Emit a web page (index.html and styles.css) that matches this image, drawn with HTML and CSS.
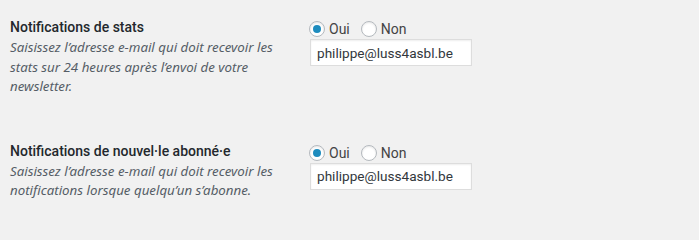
FILE: index.html
```html
<!DOCTYPE html>
<html lang="fr">
<head>
<meta charset="utf-8">
<title>Notifications</title>
<link rel="stylesheet" href="styles.css">
</head>
<body>
<div class="form-table">
  <div class="row">
    <div class="th">
      <label class="title" for="stats-email">Notifications de stats</label>
      <p class="description">Saisissez l’adresse e-mail qui doit recevoir les stats sur 24 heures après l’envoi de votre newsletter.</p>
    </div>
    <div class="td">
      <div class="radios">
        <label class="radio"><span class="dot checked"></span>Oui</label>
        <label class="radio"><span class="dot"></span>Non</label>
      </div>
      <input class="email" id="stats-email" type="text" value="philippe@luss4asbl.be">
    </div>
  </div>
  <div class="row">
    <div class="th">
      <label class="title" for="sub-email">Notifications de nouvel·le abonné·e</label>
      <p class="description">Saisissez l’adresse e-mail qui doit recevoir les notifications lorsque quelqu’un s’abonne.</p>
    </div>
    <div class="td">
      <div class="radios">
        <label class="radio"><span class="dot checked"></span>Oui</label>
        <label class="radio"><span class="dot"></span>Non</label>
      </div>
      <input class="email" id="sub-email" type="text" value="philippe@luss4asbl.be">
    </div>
  </div>
</div>
</body>
</html>
```
FILE: styles.css
```css
html, body {
  margin: 0;
  padding: 0;
  background: #f1f1f1;
}
body {
  font-family: Roboto, "Noto Sans", sans-serif;
  color: #23282d;
  font-size: 13px;
  overflow: hidden;
}
.form-table {
  padding-left: 10px;
}
.row {
  display: flex;
  padding: 18px 0 27px;
}
.row:last-child {
  padding-bottom: 0;
}
.th {
  width: 300px;
  flex: none;
}
.title {
  display: block;
  font-size: 14px;
  font-weight: 500;
  line-height: 18px;
  color: #23282d;
}
.description {
  margin: 2px 0 0;
  width: 285px;
  font-family: "Noto Sans", sans-serif;
  font-size: 13.3px;
  line-height: 19.5px;
  font-style: italic;
  color: #555d66;
}
.td {
  padding-top: 1px;
  display: flex;
  flex-direction: column;
  align-items: flex-start;
}
.radios {
  display: flex;
  align-items: center;
  height: 20px;
  margin-left: -1px;
}
.radio {
  display: flex;
  align-items: center;
  font-size: 14px;
  color: #444;
  margin-right: 11px;
}
.dot {
  box-sizing: border-box;
  width: 16px;
  height: 16px;
  border: 1px solid #b4b9be;
  border-radius: 50%;
  background: #fff;
  box-shadow: inset 0 1px 2px rgba(0,0,0,.1);
  margin-right: 4px;
  display: flex;
  align-items: center;
  justify-content: center;
}
.dot.checked::before {
  content: "";
  width: 8px;
  height: 8px;
  border-radius: 50%;
  background: #1e8cbe;
}
.email {
  box-sizing: border-box;
  width: 162px;
  height: 27px;
  margin: 0;
  padding: 0 6px;
  border: 1px solid #ddd;
  box-shadow: inset 0 1px 2px rgba(0,0,0,.07);
  background: #fff;
  font-family: Roboto, sans-serif;
  font-size: 13.6px;
  color: #32373c;
  outline: none;
}
```
